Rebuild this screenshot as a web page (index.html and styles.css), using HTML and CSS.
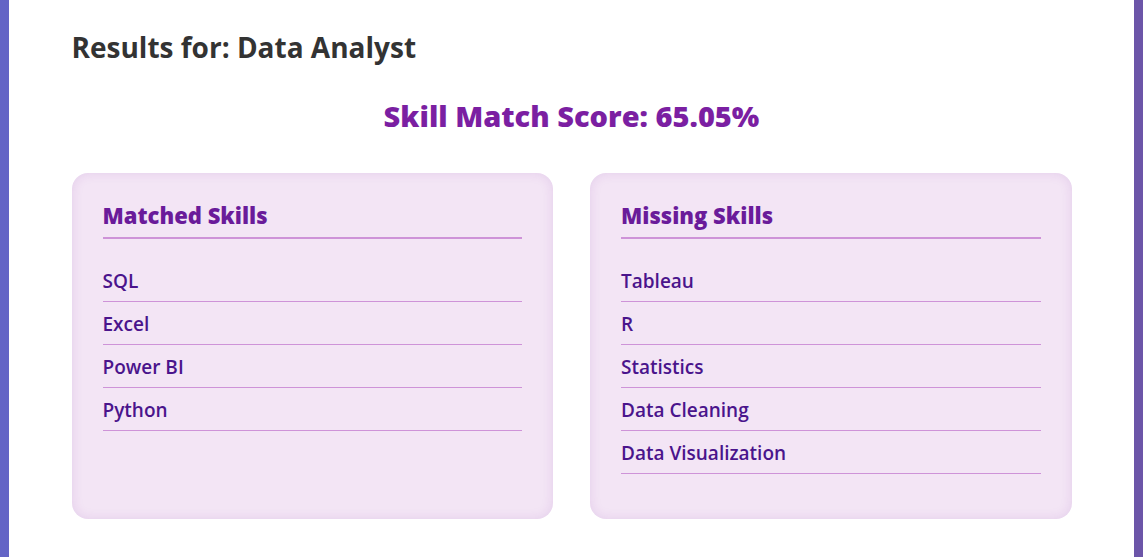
FILE: index.html
```html
<!DOCTYPE html>
<html lang="en">
<head>
<meta charset="utf-8">
<title>Results</title>
<link rel="stylesheet" href="styles.css">
</head>
<body>
<main class="page">
  <section class="results">
    <h2 class="results-title">Results for: Data Analyst</h2>
    <h3 class="score">Skill Match Score: 65.05%</h3>
    <div class="cards">
      <div class="card">
        <h4 class="card-title">Matched Skills</h4>
        <ul class="skill-list">
          <li>SQL</li>
          <li>Excel</li>
          <li>Power BI</li>
          <li>Python</li>
        </ul>
      </div>
      <div class="card">
        <h4 class="card-title">Missing Skills</h4>
        <ul class="skill-list">
          <li>Tableau</li>
          <li>R</li>
          <li>Statistics</li>
          <li>Data Cleaning</li>
          <li>Data Visualization</li>
        </ul>
      </div>
    </div>
  </section>
</main>
</body>
</html>
```

FILE: styles.css
```css
* { box-sizing: border-box; }
html, body { height: 100%; }
body {
  margin: 0;
  padding: 0 9px;
  background: linear-gradient(90deg, #6465c6 0%, #6c55a8 100%);
  font-family: "Open Sans", "Noto Sans", sans-serif;
  overflow: hidden;
}
.page {
  background: #fff;
  min-height: 100%;
  padding: 30px 0 0;
}
.results {
  width: 1000px;
  margin: 0 auto;
}
.results-title {
  margin: 0;
  font-size: 28px;
  line-height: 34px;
  font-weight: 700;
  color: #333;
}
.score {
  margin: 35px 0 0;
  text-align: center;
  font-size: 29px;
  line-height: 34px;
  font-weight: 800;
  color: #7b1fa2;
}
.cards {
  margin-top: 40px;
  display: grid;
  grid-template-columns: 1fr 1fr;
  gap: 37px;
}
.card {
  background: #f3e5f5;
  border-radius: 16px;
  padding: 27px 31px 30px;
  box-shadow: inset 0 0 12px rgba(123, 31, 162, 0.12);
}
.card-title {
  margin: 0 0 20px;
  padding-bottom: 7px;
  border-bottom: 2px solid #ce93d8;
  font-size: 22px;
  line-height: 30px;
  font-weight: 800;
  color: #6a1b9a;
}
.skill-list {
  list-style: none;
  margin: 0 0 15px;
  padding: 0;
}
.skill-list li {
  padding: 11px 0 9px;
  line-height: 22px;
  font-size: 19px;
  font-weight: 550;
  color: #4a148c;
  border-bottom: 1px solid #ce93d8;
}
```
